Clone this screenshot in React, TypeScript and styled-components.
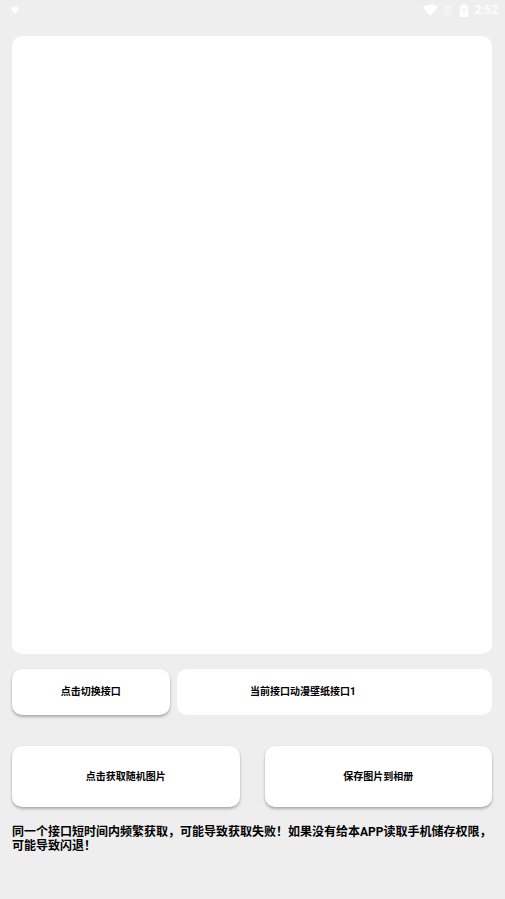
import React from "react";
import styled, { createGlobalStyle } from "styled-components";

const GlobalStyle = createGlobalStyle`
  * { box-sizing: border-box; }
  body {
    margin: 0;
    background: #eee;
    color: #000;
    font-family: Roboto, "Noto Sans CJK SC", sans-serif;
  }
`;

const Screen = styled.div`
  display: flex;
  flex-direction: column;
  min-height: 100vh;
`;

const StatusBar = styled.header`
  display: flex;
  align-items: center;
  justify-content: space-between;
  height: 20px;
  padding: 0 7px 0 9px;
  color: #fff;
`;

const StatusGroup = styled.div`
  display: flex;
  align-items: center;
`;

const StatusIcon = styled.svg<{ $gap?: number }>`
  display: block;
  margin-right: ${({ $gap = 0 }) => $gap}px;
`;

const Clock = styled.time`
  font-size: 12px;
  font-weight: 500;
  line-height: 20px;
`;

const Content = styled.main`
  flex: 1;
  display: flex;
  flex-direction: column;
  padding: 16px 13px 46px 12px;
`;

const Preview = styled.section`
  flex: 1;
  min-height: 240px;
  border-radius: 10px;
  background: #fff;
`;

const SourceRow = styled.div`
  display: grid;
  grid-template-columns: 1fr 2fr;
  gap: 7px;
  margin-top: 15px;
`;

const ActionRow = styled.div`
  display: grid;
  grid-template-columns: 1fr 1fr;
  gap: 25px;
  margin-top: 31px;
`;

const CardButton = styled.button<{ $tall?: boolean }>`
  min-height: ${({ $tall }) => ($tall ? 61 : 46)}px;
  padding: 0 8px;
  border: 0;
  border-radius: 10px;
  background: #fff;
  box-shadow: 0 2px 3px rgba(0, 0, 0, 0.28), 0 0 2px rgba(0, 0, 0, 0.05);
  color: inherit;
  font-family: inherit;
  font-size: 10px;
  font-weight: 700;
  line-height: 14px;
  cursor: pointer;
`;

const CurrentSource = styled.output`
  display: flex;
  align-items: center;
  justify-content: center;
  padding: 0 20% 0 0;
  border-radius: 10px;
  background: #fff;
  font-size: 10px;
  font-weight: 700;
  line-height: 14px;
`;

const Notice = styled.p`
  margin: 18px -8px 0 0;
  font-size: 12px;
  font-weight: 700;
  line-height: 14px;
`;

function DebugIcon() {
  return (
    <StatusIcon width="12" height="12" viewBox="0 0 12 12" aria-hidden="true">
      <circle cx="6" cy="6" r="5" fill="none" stroke="#fff" strokeOpacity="0.5" strokeDasharray="2 1" />
      <path d="M3 3h6v3.5L6 9.5 3 6.5z" fill="#fff" />
      <path d="M5.5 4.5h1v1.5h-1z" fill="#eee" />
    </StatusIcon>
  );
}

function WifiIcon() {
  return (
    <StatusIcon $gap={5} width="15" height="12" viewBox="0 0 15 12" aria-hidden="true">
      <path d="M0 3.2C4.3-.4 10.7-.4 15 3.2L7.5 12z" fill="#fff" />
    </StatusIcon>
  );
}

function NoSimIcon() {
  return (
    <StatusIcon $gap={7} width="10" height="12" viewBox="0 0 10 12" aria-hidden="true">
      <path d="M3.5 1H9v10H1V3.5z" fill="#fff" fillOpacity="0.25" />
      <path d="M1 2l8 9M3 5v4h4" fill="none" stroke="#fff" strokeOpacity="0.35" />
    </StatusIcon>
  );
}

function BatteryIcon() {
  return (
    <StatusIcon $gap={6} width="8" height="13" viewBox="0 0 8 13" aria-hidden="true">
      <path d="M2.5 0h3v1.3H7c.6 0 1 .4 1 1V12c0 .6-.4 1-1 1H1c-.6 0-1-.4-1-1V2.3c0-.6.4-1 1-1h1.5z" fill="#fff" />
      <path d="M3.3 4h1.4v4H3.3zM3.3 9h1.4v1.4H3.3z" fill="#eee" />
    </StatusIcon>
  );
}

export default function App() {
  return (
    <>
      <GlobalStyle />
      <Screen lang="zh-CN">
        <StatusBar>
          <DebugIcon />
          <StatusGroup>
            <WifiIcon />
            <NoSimIcon />
            <BatteryIcon />
            <Clock>2:52</Clock>
          </StatusGroup>
        </StatusBar>
        <Content>
          <Preview />
          <SourceRow>
            <CardButton type="button">点击切换接口</CardButton>
            <CurrentSource>当前接口动漫壁纸接口1</CurrentSource>
          </SourceRow>
          <ActionRow>
            <CardButton type="button" $tall>点击获取随机图片</CardButton>
            <CardButton type="button" $tall>保存图片到相册</CardButton>
          </ActionRow>
          <Notice>
            同一个接口短时间内频繁获取，可能导致获取失败！如果没有给本APP读取手机储存权限，可能导致闪退！
          </Notice>
        </Content>
      </Screen>
    </>
  );
}
